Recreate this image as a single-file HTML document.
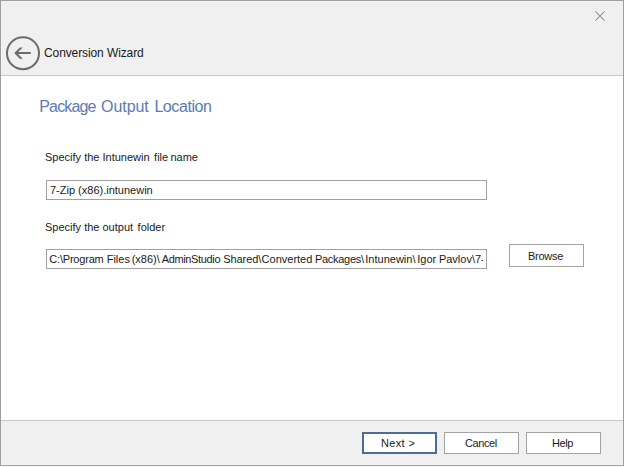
<!DOCTYPE html>
<html>
<head>
<meta charset="utf-8">
<style>
html,body{margin:0;padding:0;width:624px;height:467px;overflow:hidden;background:#fafafa;}
body{position:relative;font-family:"Liberation Sans",sans-serif;color:#1a1a1a;}
.abs{position:absolute;}
#win{left:0;top:0;width:622px;height:464px;border:1px solid #9d9d9d;background:#f0f0f0;}
#hl{left:1px;top:1px;width:620px;height:462px;border:1px solid #f4f4f4;}
#hdrline{left:1px;top:75px;width:622px;height:1px;background:#c9c9c9;}
#body{left:1px;top:76px;width:622px;height:344px;background:#fff;}
#ftrline{left:1px;top:420px;width:622px;height:1px;background:#c9c9c9;}
.t{position:absolute;white-space:nowrap;line-height:1;}
.box{position:absolute;border:1px solid #a0a0a0;background:#fff;box-sizing:border-box;overflow:hidden;}
.btn{position:absolute;box-sizing:border-box;border:1px solid #a3a3a3;background:#fff;font-size:11px;text-align:center;}
</style>
</head>
<body>
<div id="win" class="abs"></div>
<div id="hl" class="abs"></div>
<div id="hdrline" class="abs"></div>
<div id="body" class="abs"></div>
<div id="ftrline" class="abs"></div>

<!-- close X -->
<svg class="abs" style="left:590px;top:6px" width="20" height="20" viewBox="0 0 20 20">
<path d="M5.5 5.5 L14.5 14.5 M14.5 5.5 L5.5 14.5" stroke="#828282" stroke-width="1.05" fill="none"/>
</svg>

<!-- back button -->
<svg class="abs" style="left:0;top:30px" width="48" height="48" viewBox="0 0 48 48">
<circle cx="23.0" cy="23.2" r="16" stroke="#6b6b6b" stroke-width="2" fill="none"/>
<path d="M14.2 23.1 L19.8 17.4 L22.8 17.4 L18.0 22.1 L30.8 22.1 L30.8 24.1 L18.0 24.1 L22.8 28.8 L19.8 28.8 Z" fill="#6b6b6b"/>
</svg>

<div class="t" style="left:44px;top:47px;font-size:12px;letter-spacing:-0.1px;">Conversion Wizard</div>

<div class="t" style="left:39.3px;top:99px;font-size:16px;letter-spacing:-0.85px;color:#5a7bb4;">Package</div><div class="t" style="left:101px;top:99px;font-size:16px;letter-spacing:-0.05px;color:#5a7bb4;">Output</div><div class="t" style="left:154.4px;top:99px;font-size:16px;letter-spacing:-0.42px;color:#5a7bb4;">Location</div>

<div class="t" style="left:45px;top:152px;font-size:11px;">Specify the Intunewin</div><div class="t" style="left:154.1px;top:152px;font-size:11px;">file</div><div class="t" style="left:170.4px;top:152px;font-size:11px;">name</div>
<div class="box" style="left:46px;top:180px;width:441px;height:20px;"><div class="t" style="left:3px;top:4px;font-size:11px;">7-Zip (x86).intunewin</div></div>

<div class="t" style="left:45px;top:222px;font-size:11px;">Specify the output</div><div class="t" style="left:137.6px;top:222px;font-size:11px;">folder</div>
<div class="box" style="left:46px;top:249px;width:441px;height:20px;"><div class="abs" style="left:0;top:0;width:436px;height:18px;overflow:hidden;"><div class="t" style="left:2.3px;top:4px;font-size:11px;letter-spacing:-0.2px;">C:\Program</div><div class="t" style="left:59.7px;top:4px;font-size:11px;">Files</div><div class="t" style="left:84.7px;top:4px;font-size:11px;">(x86)\</div><div class="t" style="left:114.7px;top:4px;font-size:11px;letter-spacing:-0.35px;">AdminStudio</div><div class="t" style="left:176.3px;top:4px;font-size:11px;letter-spacing:-0.1px;">Shared\</div><div class="t" style="left:214.6px;top:4px;font-size:11px;">Converted</div><div class="t" style="left:268px;top:4px;font-size:11px;letter-spacing:-0.3px;">Packages\</div><div class="t" style="left:318.3px;top:4px;font-size:11px;">Intunewin\</div><div class="t" style="left:370.3px;top:4px;font-size:11px;">Igor</div><div class="t" style="left:391.9px;top:4px;font-size:11px;">Pavlov\7-Zip (x86)</div></div></div>

<div class="btn" style="left:509px;top:244px;width:75px;height:23px;"><div class="t" style="left:18px;top:6px;letter-spacing:-0.25px;">Browse</div></div>

<div class="btn" style="left:362px;top:432px;width:75px;height:22px;border:2px solid #4e6c98;"><div class="t" style="left:17px;top:4px;letter-spacing:0.35px;">Next &gt;</div></div>
<div class="btn" style="left:444px;top:432px;width:75px;height:22px;"><div class="t" style="left:20px;top:5px;letter-spacing:-0.4px;">Cancel</div></div>
<div class="btn" style="left:526px;top:432px;width:75px;height:22px;"><div class="t" style="left:25px;top:5px;letter-spacing:-0.4px;">Help</div></div>
</body>
</html>
